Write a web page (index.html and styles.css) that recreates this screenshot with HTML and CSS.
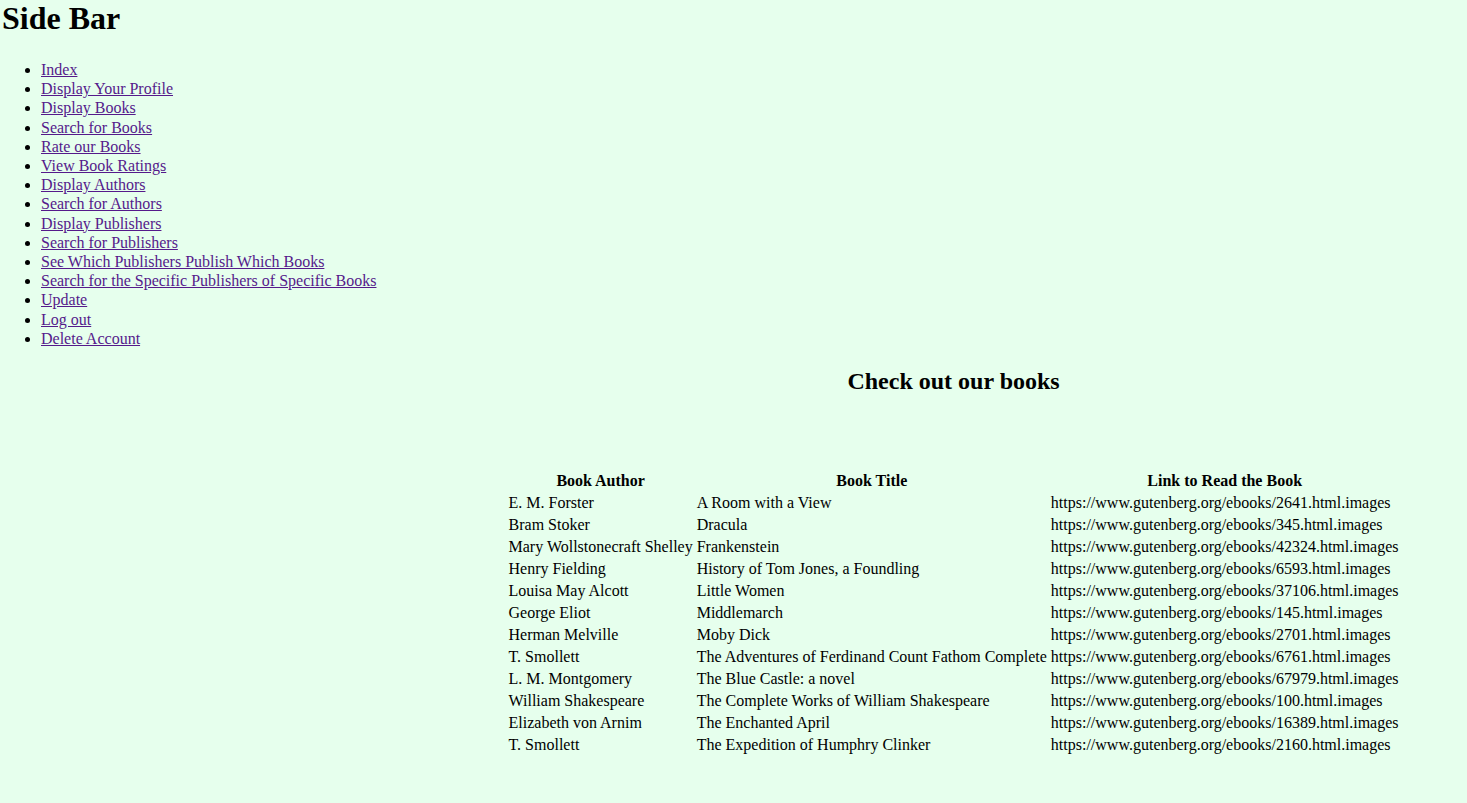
FILE: index.html
```html
<!DOCTYPE html>
<html>
<head>
<meta charset="utf-8">
<title>Books</title>
<link rel="stylesheet" href="styles.css">
</head>
<body>
<div class="sidebar">
  <h1 class="side-title">Side Bar</h1>
  <ul class="side-list">
    <li><a href="#" class="visited">Index</a></li>
    <li><a href="#" class="visited">Display Your Profile</a></li>
    <li><a href="#" class="visited">Display Books</a></li>
    <li><a href="#" class="visited">Search for Books</a></li>
    <li><a href="#" class="visited">Rate our Books</a></li>
    <li><a href="#" class="visited">View Book Ratings</a></li>
    <li><a href="#" class="visited">Display Authors</a></li>
    <li><a href="#" class="visited">Search for Authors</a></li>
    <li><a href="#" class="visited">Display Publishers</a></li>
    <li><a href="#" class="visited">Search for Publishers</a></li>
    <li><a href="#" class="visited">See Which Publishers Publish Which Books</a></li>
    <li><a href="#" class="visited">Search for the Specific Publishers of Specific Books</a></li>
    <li><a href="#" class="visited">Update</a></li>
    <li><a href="#" class="visited">Log out</a></li>
    <li><a href="#" class="visited">Delete Account</a></li>
  </ul>
</div>
<div class="main">
  <h2 class="main-title">Check out our books</h2>
  <table class="books">
    <thead>
      <tr><th>Book Author</th><th>Book Title</th><th>Link to Read the Book</th></tr>
    </thead>
    <tbody>
      <tr><td>E. M. Forster</td><td>A Room with a View</td><td>https://www.gutenberg.org/ebooks/2641.html.images</td></tr>
      <tr><td>Bram Stoker</td><td>Dracula</td><td>https://www.gutenberg.org/ebooks/345.html.images</td></tr>
      <tr><td>Mary Wollstonecraft Shelley</td><td>Frankenstein</td><td>https://www.gutenberg.org/ebooks/42324.html.images</td></tr>
      <tr><td>Henry Fielding</td><td>History of Tom Jones, a Foundling</td><td>https://www.gutenberg.org/ebooks/6593.html.images</td></tr>
      <tr><td>Louisa May Alcott</td><td>Little Women</td><td>https://www.gutenberg.org/ebooks/37106.html.images</td></tr>
      <tr><td>George Eliot</td><td>Middlemarch</td><td>https://www.gutenberg.org/ebooks/145.html.images</td></tr>
      <tr><td>Herman Melville</td><td>Moby Dick</td><td>https://www.gutenberg.org/ebooks/2701.html.images</td></tr>
      <tr><td>T. Smollett</td><td>The Adventures of Ferdinand Count Fathom Complete</td><td>https://www.gutenberg.org/ebooks/6761.html.images</td></tr>
      <tr><td>L. M. Montgomery</td><td>The Blue Castle: a novel</td><td>https://www.gutenberg.org/ebooks/67979.html.images</td></tr>
      <tr><td>William Shakespeare</td><td>The Complete Works of William Shakespeare</td><td>https://www.gutenberg.org/ebooks/100.html.images</td></tr>
      <tr><td>Elizabeth von Arnim</td><td>The Enchanted April</td><td>https://www.gutenberg.org/ebooks/16389.html.images</td></tr>
      <tr><td>T. Smollett</td><td>The Expedition of Humphry Clinker</td><td>https://www.gutenberg.org/ebooks/2160.html.images</td></tr>
    </tbody>
  </table>
</div>
</body>
</html>
```
FILE: styles.css
```css
html, body {
  background: #e6ffed;
}
body {
  margin: 0;
  font-family: "Liberation Serif", "Times New Roman", serif;
  font-size: 16px;
  color: #000;
}
.side-title {
  font-size: 32px;
  font-weight: bold;
  margin: 0 0 23px 2px;
}
.side-list {
  margin: 16px 0;
  padding-left: 41px;
}
.side-list li {
  line-height: 19.2px;
}
.side-list a {
  color: #551a8b;
  text-decoration: underline;
}
.main {
  margin-left: 30%;
}
.main-title {
  font-size: 24px;
  font-weight: bold;
  text-align: center;
  margin: 20px 0;
}
.books {
  margin: 74px auto 0;
  border-spacing: 2px;
}
.books th, .books td {
  padding: 1px;
}
.books td {
  text-align: left;
}
```
